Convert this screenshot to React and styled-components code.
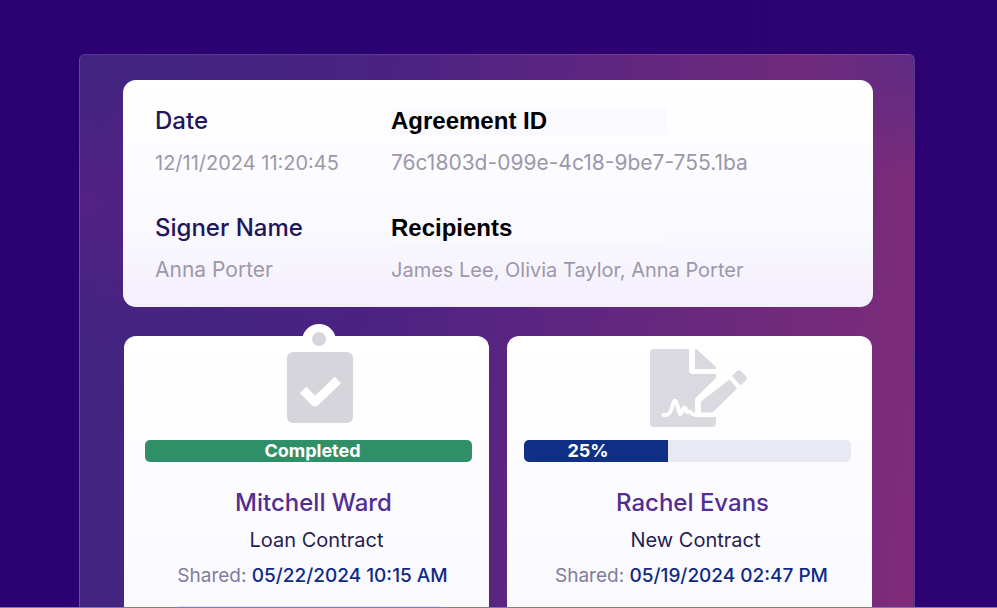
import React from 'react';
import styled, { createGlobalStyle } from 'styled-components';

const GlobalStyle = createGlobalStyle`
  * {
    box-sizing: border-box;
  }

  body {
    margin: 0;
    background: #2c0070;
    font-family: Inter, 'Liberation Sans', sans-serif;
  }
`;

const Page = styled.main`
  height: 100vh;
  overflow: hidden;
  display: flex;
  padding: 54px 82px 0 79px;
  border-bottom: 1px solid #8577b4;
  background: linear-gradient(90deg, #2b0071, #2d0272);
`;

const Panel = styled.section`
  flex: 1;
  display: flex;
  flex-direction: column;
  gap: 29px;
  padding: 25px 41px 0 43px;
  border: 1px solid rgba(255, 255, 255, 0.1);
  border-bottom: none;
  border-radius: 6px 6px 0 0;
  background: radial-gradient(
      circle at 1% 27%,
      rgba(84, 33, 132, 0.9),
      transparent 150px
    ),
    radial-gradient(
      circle at 100% 0%,
      rgba(88, 44, 134, 0.8),
      transparent 120px
    ),
    linear-gradient(97deg, #412580 0%, #4b2284 35%, #702a7c 80%, #7f2b7a 100%);
`;

const Summary = styled.dl`
  display: grid;
  grid-template-columns: 236px 1fr;
  row-gap: 38px;
  margin: 0;
  padding: 27px 32px 24px;
  border-radius: 13px;
  background: linear-gradient(#ffffff, #faf9fe 65%, #f4effc);
`;

const Field = styled.div`
  display: flex;
  flex-direction: column;
  gap: 15px;
`;

const Label = styled.dt`
  font-size: 24px;
  line-height: 28px;
  font-weight: 500;
  color: #211659;

  ${({ $strong }) =>
    $strong &&
    `
    max-width: 276px;
    font-family: 'Liberation Sans', Arial, sans-serif;
    font-weight: 700;
    color: #000;
    background: #faf9fe;
  `}
`;

const Value = styled.dd`
  margin: 0;
  font-size: ${({ $large }) => ($large ? 21 : 20)}px;
  line-height: 26px;
  color: #9c98ab;
  white-space: nowrap;
`;

const Cards = styled.div`
  flex: 1;
  display: grid;
  grid-template-columns: 1fr 1fr;
  gap: 18px;
  padding: 0 1px;
`;

const Card = styled.article`
  position: relative;
  display: flex;
  flex-direction: column;
  align-items: center;
  padding: 12px 17px 0 21px;
  border-radius: 12px 12px 0 0;
  background: linear-gradient(#ffffff, #f9f8fe);

  &:last-child {
    padding: 12px 21px 0 17px;
  }
`;

const Hook = styled.svg`
  position: absolute;
  top: -12px;
  left: calc(50% + 12px);
  transform: translateX(-50%);
`;

const IconSlot = styled.div`
  height: 92px;
  padding-left: 22px;
`;

const Track = styled.div`
  display: flex;
  width: 100%;
  height: 22px;
  border-radius: 5px;
  overflow: hidden;
  background: #e9e9f3;
`;

const Fill = styled.div`
  padding: ${({ $done }) => ($done ? '0 0 0 8px' : '0 16px 0 0')};
  text-align: center;
  font-size: 18px;
  line-height: 22px;
  font-weight: 700;
  color: #fff;
  background: ${({ $done }) => ($done ? '#2f9067' : '#0f3084')};
`;

const Name = styled.h2`
  margin: 26px 0 0;
  padding-left: 10px;
  font-size: 24px;
  line-height: 30px;
  font-weight: 500;
  color: #532d91;
`;

const Contract = styled.p`
  margin: 8px 0 0;
  padding-left: 16px;
  font-size: 20px;
  line-height: 28px;
  color: #261e50;
`;

const Shared = styled.p`
  margin: 8px 0 0;
  padding-left: 8px;
  font-size: 19px;
  line-height: 28px;
  color: #827b9e;
  white-space: nowrap;

  time {
    font-weight: 500;
    color: #0e2a84;
  }
`;

const Actions = styled.div`
  width: 270px;
  height: 40px;
  margin-top: 16px;
  border: 1px solid #e4e1f5;
  border-radius: 6px;
`;

const ClipboardIcon = () => (
  <svg width="66" height="80" viewBox="0 0 66 80" aria-hidden="true">
    <rect y="4" width="66" height="71" rx="6" fill="#d6d5dc" />
    <path
      d="M16 42 L28 54 L51 32"
      fill="none"
      stroke="#fff"
      strokeWidth="9"
      strokeLinejoin="round"
    />
  </svg>
);

const SignIcon = () => (
  <svg width="98" height="80" viewBox="0 0 98 80" aria-hidden="true">
    <g fill="#dad9e0">
      <path d="M4 1H39V22a4 4 0 0 0 4 4H66V75a4 4 0 0 1-4 4H4a4 4 0 0 1-4-4V5a4 4 0 0 1 4-4Z" />
      <path d="M45 1h1.5L66 19v2H45Z" />
    </g>
    <path d="M45 69V50.500L67 29V69Z" fill="#fefefe" />
    <path
      d="M13.500 67C18 67.500 20 66 21.500 61C23.500 52 25.500 51 26.500 55L30 66C32 66 32.500 59.500 34.500 59.500C36.500 59.500 35.500 65 38 64C41 62 41 67 45.500 67H51"
      fill="none"
      stroke="#fefefe"
      strokeWidth="4"
      strokeLinecap="round"
      strokeLinejoin="round"
    />
    <g fill="#dad9e0">
      <path d="M51 64.500V53.500L79.500 31.500L87 40.500L62.500 64.500Z" />
      <path d="M82 28l4.500-4.500q2.500-2.500 5 0l4.500 4.500q2 2.500 0 4.500L90.500 37.500Z" />
    </g>
  </svg>
);

const App = () => (
  <>
    <GlobalStyle />
    <Page>
      <Panel>
        <Summary>
          <Field>
            <Label>Date</Label>
            <Value>12/11/2024 11:20:45</Value>
          </Field>
          <Field>
            <Label $strong>Agreement ID</Label>
            <Value $large>76c1803d-099e-4c18-9be7-755.1ba</Value>
          </Field>
          <Field>
            <Label>Signer Name</Label>
            <Value $large>Anna Porter</Value>
          </Field>
          <Field>
            <Label $strong>Recipients</Label>
            <Value>James Lee, Olivia Taylor, Anna Porter</Value>
          </Field>
        </Summary>

        <Cards>
          <Card>
            <Hook width="34" height="28" viewBox="0 0 34 28" aria-hidden="true">
              <circle cx="17" cy="17" r="17" fill="#fff" />
              <circle cx="17" cy="15" r="7" fill="#d6d5dc" />
            </Hook>
            <IconSlot>
              <ClipboardIcon />
            </IconSlot>
            <Track>
              <Fill $done style={{ width: '100%' }}>
                Completed
              </Fill>
            </Track>
            <Name>Mitchell Ward</Name>
            <Contract>Loan Contract</Contract>
            <Shared>
              Shared: <time>05/22/2024 10:15 AM</time>
            </Shared>
            <Actions />
          </Card>

          <Card>
            <IconSlot>
              <SignIcon />
            </IconSlot>
            <Track>
              <Fill style={{ width: '44%' }}>25%</Fill>
            </Track>
            <Name>Rachel Evans</Name>
            <Contract>New Contract</Contract>
            <Shared>
              Shared: <time>05/19/2024 02:47 PM</time>
            </Shared>
          </Card>
        </Cards>
      </Panel>
    </Page>
  </>
);

export default App;
